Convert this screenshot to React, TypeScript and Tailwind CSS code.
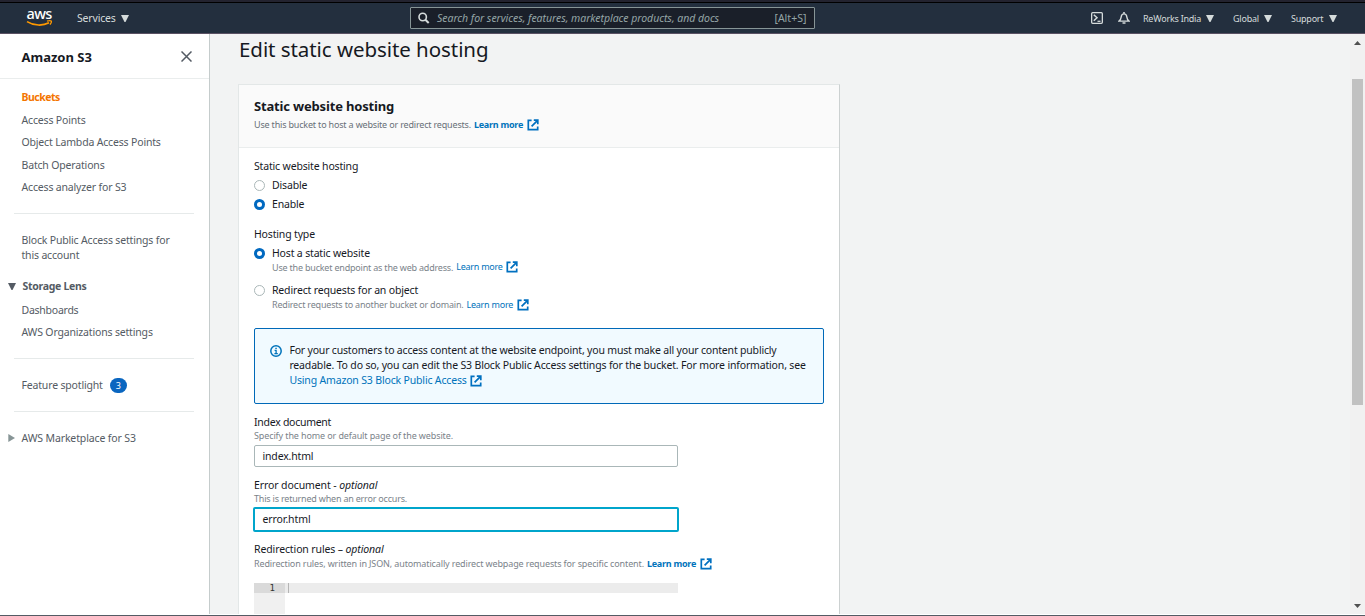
import type { ReactNode } from "react";

function ExternalIcon({ className = "" }: { className?: string }) {
  return (
    <svg viewBox="0 0 12 12" className={`inline-block h-3 w-3 shrink-0 ${className}`} fill="none" stroke="#0070c0" strokeWidth="1.7">
      <path d="M4.6 1.4H1.3v9.3h9.4V7.6" />
      <path d="M6.8 1.200h4v4M10.600 1.400 4.600 7.400" />
    </svg>
  );
}

function Caret({ className = "" }: { className?: string }) {
  return (
    <svg viewBox="0 0 8 7" className={`h-[7px] w-2 shrink-0 ${className}`} fill="currentColor">
      <path d="M0 0h8L4.500 7h-1z" />
    </svg>
  );
}

function AwsLogo() {
  return (
    <div className="relative h-[18px] w-[27px]">
      <span className="absolute -top-[6px] left-[0.5px] text-[14.5px] leading-[20px] font-medium tracking-[-0.6px] text-white">aws</span>
      <svg viewBox="0 0 27 18" className="absolute inset-0 h-full w-full" fill="none" stroke="#ff9900">
        <path d="M1 12.600C8 17 17 16.900 23 13.800" strokeWidth="1.7" />
        <path d="M21 12.100c1.800-.6 3.600-.7 4.200-.2.4.6-.1 2.300-1.200 3.700" strokeWidth="1.300" />
      </svg>
    </div>
  );
}

function Radio({ checked = false }: { checked?: boolean }) {
  return checked ? (
    <span className="flex h-[11px] w-[11px] shrink-0 items-center justify-center rounded-full bg-[#0069c0]">
      <span className="h-[5px] w-[5px] rounded-full bg-white" />
    </span>
  ) : (
    <span className="h-[11px] w-[11px] shrink-0 rounded-full border border-[#aab7b8] bg-white" />
  );
}

function RadioRow({ checked, children }: { checked?: boolean; children: ReactNode }) {
  return (
    <div className="flex h-[15px] items-center gap-[7px]">
      <Radio checked={checked} />
      <span>{children}</span>
    </div>
  );
}

function NavLink({ children }: { children: ReactNode }) {
  return <a className="block leading-[15px]">{children}</a>;
}

function Header() {
  return (
    <header className="flex h-[34px] shrink-0 flex-col border-b border-[#5a5163] bg-[#232f3e] text-[#d5dbdb]">
      <div className="h-[3px] shrink-0 border-b border-black bg-[#23232f]" />
      <div className="flex flex-1 items-center">
        <div className="ml-[26px] flex w-[384px] items-center">
          <AwsLogo />
          <span className="mt-px ml-6 text-[10.5px] tracking-[-0.18px]">Services</span>
          <Caret className="ml-[5px]" />
        </div>
        <div className="flex h-[22px] w-[405px] items-center rounded-[1px] border border-[#879596] bg-[#1a1f29] pr-[7.5px] pl-[7px] text-[10.5px] text-[#95a5a6]">
          <svg viewBox="0 0 12 12" className="h-3 w-3 shrink-0" fill="none" stroke="#d5dbdb" strokeWidth="1.6">
            <circle cx="4.700" cy="5" r="3.700" />
            <path d="m7.400 7.700 3.300 3.300" strokeWidth="2" />
          </svg>
          <span className="mt-px ml-[7px] flex-1 tracking-[-0.03px] italic">Search for services, features, marketplace products, and docs</span>
          <span className="mt-px tracking-[0.03px]">[Alt+S]</span>
        </div>
        <div className="ml-[276px] flex items-center text-[9px] tracking-[-0.23px]">
          <svg viewBox="0 0 12 12" className="h-3 w-3" fill="none" stroke="#d5dbdb" strokeWidth="1.3">
            <rect x="0.650" y="0.650" width="10.700" height="10.700" rx="1" />
            <path d="M2.800 2.800 6 5.800 2.800 8.800" strokeWidth="1.500" />
            <path d="M6.500 9.300h3" />
          </svg>
          <svg viewBox="0 0 12 12" className="ml-[15px] h-3 w-3" fill="none" stroke="#d5dbdb" strokeWidth="1.4">
            <path d="M1 9.100c1.800-1.300 2-2.400 2.200-4.200C3.400 3 4.300 1.900 6 1.900S8.600 3 8.800 4.900C9 6.700 9.200 7.800 11 9.100z" />
            <path d="M6 0v1.800M4.500 11h3" strokeWidth="1.600" />
          </svg>
          <span className="mt-px ml-[13px] w-[58px] whitespace-nowrap">ReWorks India</span>
          <Caret className="ml-[5px]" />
          <span className="mt-px ml-[19px] w-[27px]">Global</span>
          <Caret className="ml-[4px]" />
          <span className="mt-px ml-[19px] w-[33px]">Support</span>
          <Caret className="ml-[5px]" />
        </div>
      </div>
    </header>
  );
}

function Sidebar() {
  return (
    <aside className="w-[210px] shrink-0 border-r border-[#c5cccc] bg-white text-[10.5px] tracking-[-0.17px] text-[#545b64]">
      <div className="flex h-[45px] items-center justify-between border-b border-[#eaeded] pr-[17.5px] pl-[21.5px]">
        <span className="mt-[2px] text-[13px] leading-[18px] font-bold tracking-normal text-[#16191f]">Amazon S3</span>
        <svg viewBox="0 0 11 11" className="mt-px h-[11px] w-[11px]" stroke="#545b64" strokeWidth="1.500">
          <path d="m.5.5 10 10M10.500.5l-10 10" />
        </svg>
      </div>
      <nav className="flex flex-col gap-[7.4px] pt-[11.4px] pl-[21.5px]">
        <a className="block leading-[15px] font-bold tracking-[-0.5px] text-[#f47500]">Buckets</a>
        <NavLink>Access Points</NavLink>
        <NavLink>Object Lambda Access Points</NavLink>
        <NavLink>Batch Operations</NavLink>
        <NavLink>Access analyzer for S3</NavLink>
      </nav>
      <hr className="mt-[18px] mr-[15px] ml-[14px] border-[#e6eaea]" />
      <p className="mt-[19px] pl-[21.5px] leading-[15px]">
        Block Public Access settings for
        <br />
        this account
      </p>
      <div className="mt-4 flex h-[15px] items-center pl-2">
        <Caret className="mr-[6.5px]" />
        <span className="font-bold tracking-[-0.29px]">Storage Lens</span>
      </div>
      <nav className="flex flex-col gap-[7.4px] pt-[9px] pl-[21.5px]">
        <a className="block leading-[15px] tracking-[-0.25px]">Dashboards</a>
        <NavLink>AWS Organizations settings</NavLink>
      </nav>
      <hr className="mt-[17.6px] mr-[15px] ml-[14px] border-[#e6eaea]" />
      <div className="mt-[19px] flex h-[15px] items-center pl-[21.5px]">
        <span>Feature spotlight</span>
        <span className="ml-[7px] flex h-[15px] w-[17px] items-center justify-center rounded-full bg-[#0a66c0] text-[9px] leading-[13px] text-white">3</span>
      </div>
      <hr className="mt-[18px] mr-[15px] ml-[14px] border-[#e6eaea]" />
      <div className="mt-[19px] flex h-[15px] items-center pl-2">
        <svg viewBox="0 0 7 8" className="mr-[6.5px] h-2 w-[7px]" fill="#879596">
          <path d="M.3 0v8L7 4z" />
        </svg>
        <span className="tracking-[-0.13px]">AWS Marketplace for S3</span>
      </div>
    </aside>
  );
}

function Alert() {
  return (
    <div className="mt-[17px] mr-[15px] flex h-[76px] rounded-[2px] border border-[#0069b8] bg-[#f1faff] pt-[14px] pl-[15px] whitespace-nowrap">
      <svg viewBox="0 0 12 12" className="mt-[2px] h-3 w-3 shrink-0" fill="none" stroke="#0073bb" strokeWidth="1.5">
        <circle cx="6" cy="6" r="5.200" />
        <path d="M4.600 5.400h1.500v3.200M4.400 8.700h3.400M5.300 3.300h1.500" strokeWidth="1.300" />
      </svg>
      <p className="ml-[7.4px] leading-[15px]">
        <span className="tracking-[-0.185px]">For your customers to access content at the website endpoint, you must make all your content publicly</span>
        <br />
        readable. To do so, you can edit the S3 Block Public Access settings for the bucket. For more information, see
        <br />
        <a className="text-[#0073bb]">
          Using Amazon S3 Block Public Access <ExternalIcon className="ml-px" />
        </a>
      </p>
    </div>
  );
}

function HostingCard() {
  return (
    <section className="mt-[21px] w-[602px] border border-[#e3e7e7] border-r-[#ccd1d1] bg-white">
      <div className="h-[63px] border-b border-[#eaeded] bg-[#fafafa] pt-3 pl-[15px]">
        <h2 className="text-[13px] leading-[18px] font-bold tracking-[-0.17px]">Static website hosting</h2>
        <p className="mt-[3px] flex h-[13px] items-center text-[9px] leading-[13px] tracking-[-0.18px] text-[#687078]">
          Use this bucket to host a website or redirect requests.
          <a className="ml-[3px] font-bold tracking-[-0.26px] text-[#0073bb]">Learn more</a>
          <ExternalIcon className="ml-1" />
        </p>
      </div>
      <div className="pt-[11px] pl-[15px] text-[10.5px] leading-[15px] tracking-[-0.165px]">
        <div className="flex flex-col gap-1">
          <span>Static website hosting</span>
          <RadioRow>Disable</RadioRow>
          <RadioRow checked>Enable</RadioRow>
        </div>
        <div className="mt-[15px] mb-1">Hosting type</div>
        <RadioRow checked>Host a static website</RadioRow>
        <p className="flex h-[13px] items-center pl-[18px] text-[9px] leading-[13px] tracking-[-0.2px] text-[#7b838a]">
          Use the bucket endpoint as the web address.
          <a className="mb-[2px] ml-[3px] tracking-[-0.24px] text-[#0073bb]">Learn more</a>
          <ExternalIcon className="mb-[2px] ml-[3.5px]" />
        </p>
        <div className="h-[9px]" />
        <RadioRow>Redirect requests for an object</RadioRow>
        <p className="flex h-[13px] items-center pl-[18px] text-[9px] leading-[13px] tracking-[-0.19px] text-[#7b838a]">
          Redirect requests to another bucket or domain.
          <a className="ml-[3px] tracking-[-0.24px] text-[#0073bb]">Learn more</a>
          <ExternalIcon className="ml-[3.5px]" />
        </p>
        <Alert />
        <label className="mt-[11px] block leading-[14px] tracking-[-0.27px]">Index document</label>
        <p className="text-[9px] leading-[13px] tracking-[-0.12px] text-[#7b838a]">Specify the home or default page of the website.</p>
        <div className="mt-[3px] flex h-[22px] w-[424px] items-center rounded-[2px] border border-[#aab7b8] pl-[7.5px]">index.html</div>
        <label className="mt-[11px] block leading-[14px] tracking-[-0.1px]">
          Error document - <i>optional</i>
        </label>
        <p className="text-[9px] leading-[13px] tracking-[-0.2px] text-[#7b838a]">This is returned when an error occurs.</p>
        <div className="mt-[2px] -ml-px flex h-[25px] w-[426px] items-center rounded-[2px] border-2 border-[#00a5cb] pl-[7.5px] tracking-[-0.1px]">error.html</div>
        <label className="mt-[10px] block leading-[14px] tracking-[-0.12px]">
          Redirection rules – <i>optional</i>
        </label>
        <p className="mt-px flex h-[13px] items-center text-[9px] leading-[13px] tracking-[-0.13px] text-[#7b838a]">
          Redirection rules, written in JSON, automatically redirect webpage requests for specific content.
          <a className="ml-[3px] font-bold tracking-[-0.26px] text-[#0073bb]">Learn more</a>
          <ExternalIcon className="ml-1" />
        </p>
        <div className="mt-[13px] flex h-[60px] w-[424px] font-['DejaVu_Sans_Mono',monospace] text-[9px] tracking-normal">
          <div className="w-[31px] bg-[#f0f0f0]">
            <div className="h-[10px] bg-[#dadada] pr-[10px] text-right leading-[10px] text-[#333]">1</div>
          </div>
          <div className="h-[10px] flex-1 bg-[#ececec] pl-[3px]">
            <div className="h-[10px] w-px bg-[#b5b5b5]" />
          </div>
        </div>
      </div>
    </section>
  );
}

function Scrollbar() {
  return (
    <div className="flex w-[15px] shrink-0 flex-col items-center bg-[#f1f1f1] pt-[7px] pb-[6px]">
      <svg viewBox="0 0 7 4" className="h-1 w-[7px]" fill="#505050">
        <path d="M0 4h7L3.500 0z" />
      </svg>
      <div className="mt-[34px] h-[326px] w-[11px] bg-[#c1c1c1]" />
      <svg viewBox="0 0 7 4" className="mt-auto h-1 w-[7px]" fill="#505050">
        <path d="M0 0h7L3.500 4z" />
      </svg>
    </div>
  );
}

export default function App() {
  return (
    <div className="flex h-[616px] w-[1365px] flex-col overflow-hidden bg-white font-['Noto_Sans',sans-serif] text-[#16191f]">
      <Header />
      <div className="flex h-[580px] shrink-0">
        <Sidebar />
        <main className="min-w-0 flex-1 overflow-hidden bg-[#f2f3f3] pt-px pl-7">
          <h1 className="pl-px text-[20.5px] leading-[28px] tracking-[-0.06px]">Edit static website hosting</h1>
          <HostingCard />
        </main>
        <Scrollbar />
      </div>
      <div className="mt-px h-px bg-[#545b64]" />
    </div>
  );
}
